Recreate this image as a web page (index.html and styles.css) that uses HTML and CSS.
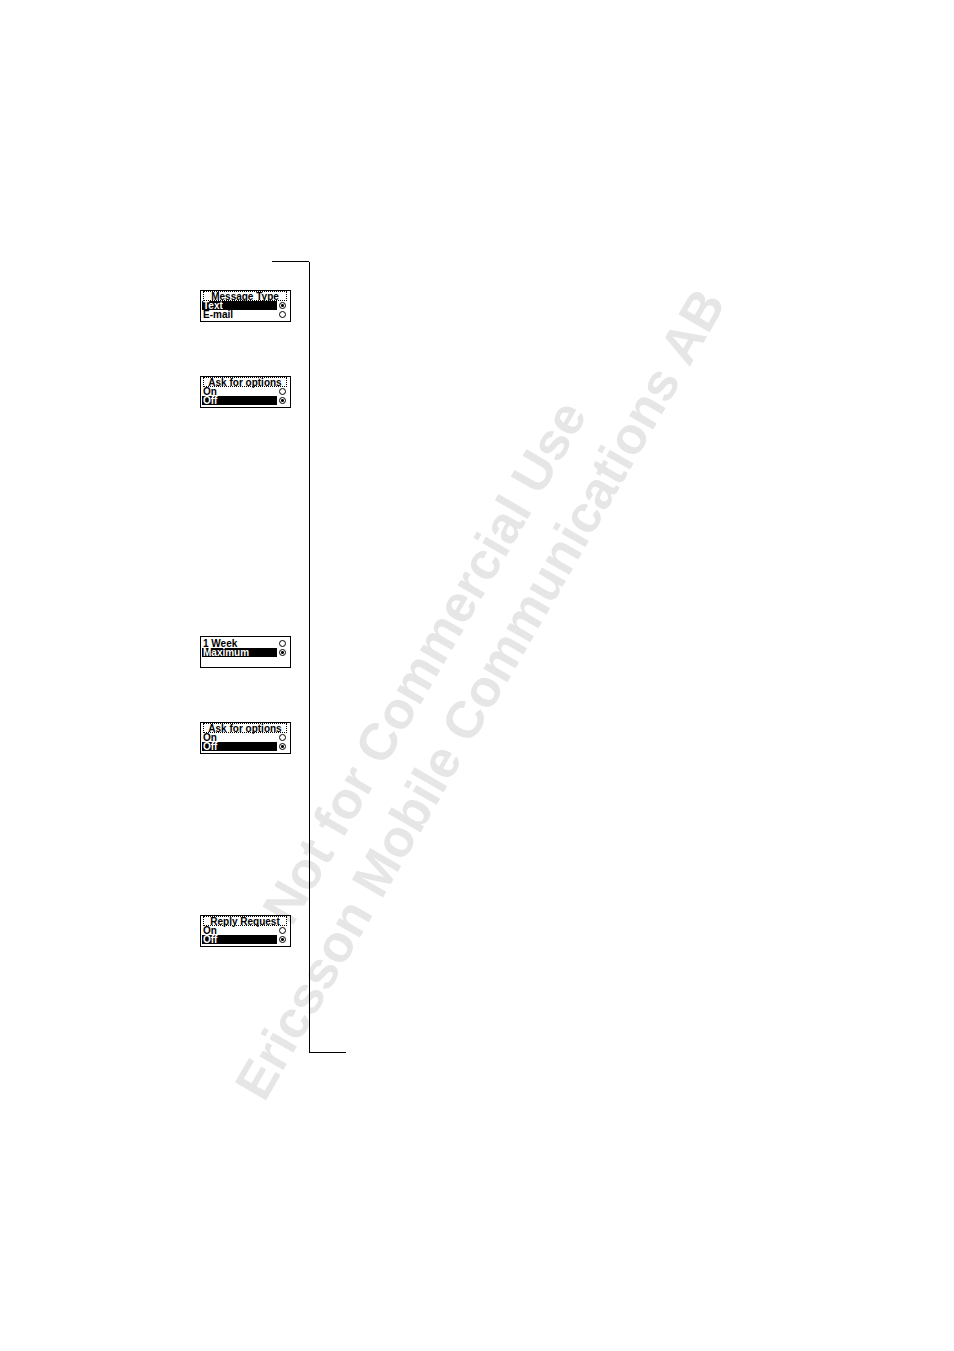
FILE: index.html
```html
<!DOCTYPE html>
<html lang="en">
<head>
    <meta charset="UTF-8">
    <meta name="viewport" content="width=device-width, initial-scale=1.0">
    <title>Message options</title>
    <link rel="stylesheet" href="styles.css">
</head>
<body>
    <div class="watermark">
        <p>Not for Commercial Use</p>
        <p>Ericsson Mobile Communications AB</p>
    </div>

    <main>
        <div class="rule rule-top"></div>
        <div class="column">
            <section class="screen" role="radiogroup" aria-labelledby="type-title">
                <h2 id="type-title">Message Type</h2>
                <label><span>Text</span><input type="radio" name="type" checked></label>
                <label><span>E-mail</span><input type="radio" name="type"></label>
            </section>

            <section class="screen" role="radiogroup" aria-labelledby="ask-type-title">
                <h2 id="ask-type-title">Ask for options</h2>
                <label><span>On</span><input type="radio" name="ask-type"></label>
                <label><span>Off</span><input type="radio" name="ask-type" checked></label>
            </section>

            <section class="screen untitled new-group" role="radiogroup" aria-label="Validity period">
                <label><span>1 Week</span><input type="radio" name="validity"></label>
                <label><span>Maximum</span><input type="radio" name="validity" checked></label>
            </section>

            <section class="screen" role="radiogroup" aria-labelledby="ask-validity-title">
                <h2 id="ask-validity-title">Ask for options</h2>
                <label><span>On</span><input type="radio" name="ask-validity"></label>
                <label><span>Off</span><input type="radio" name="ask-validity" checked></label>
            </section>

            <section class="screen reply" role="radiogroup" aria-labelledby="reply-title">
                <h2 id="reply-title">Reply Request</h2>
                <label><span>On</span><input type="radio" name="reply"></label>
                <label><span>Off</span><input type="radio" name="reply" checked></label>
            </section>
        </div>
        <div class="rule rule-bottom"></div>
    </main>
</body>
</html>
```

FILE: styles.css
```css
* {
    box-sizing: border-box;
}

body {
    font-family: "Liberation Sans", Arial, sans-serif;
    font-weight: bold;
    margin: 0;
    background-color: white;
    color: black;
}

main {
    position: relative;
    padding: 261px 0 298px 200px;
}

/* Page frame */
.rule {
    width: 37px;
    height: 1px;
    background-color: black;
}

.rule-top {
    margin-left: 72px;
}

.rule-bottom {
    margin-left: 109px;
}

.column {
    width: 110px;
    padding: 28px 0 105px;
    border-right: 1px solid black;
}

/* Phone displays */
.screen {
    width: 91px;
    height: 32px;
    padding: 0 3px 0 1px;
    border: 1px solid black;
    font-size: 10px;
    line-height: 9px;
}

.screen + .screen {
    margin-top: 54px;
}

.screen + .new-group {
    margin-top: 228px;
}

.screen + .reply {
    margin-top: 161px;
}

.untitled {
    padding-top: 2px;
}

.screen h2 {
    height: 10px;
    margin: 0 0 0 1px;
    border: 1px dotted black;
    background-color: white;
    font-size: 10px;
    line-height: 9px;
    text-align: center;
}

.screen label {
    display: flex;
    align-items: center;
    gap: 2px;
    height: 9px;
    background-color: white;
}

.screen span {
    width: 75px;
    height: 9px;
    padding-left: 1px;
}

.screen label:has(:checked) span {
    background-color: black;
    color: white;
}

input[type="radio"] {
    appearance: none;
    width: 7px;
    height: 7px;
    margin: 0;
    border: 1px solid black;
    border-radius: 50%;
    background-color: white;
}

input[type="radio"]:checked {
    background-image: radial-gradient(circle, black 1px, white 2px);
}

/* Diagonal notice behind the displays */
.watermark {
    position: absolute;
    top: 678px;
    left: 452px;
    width: 0;
    height: 128px;
    display: flex;
    flex-direction: column;
    align-items: center;
    transform: translateY(-50%) rotate(-60deg);
    color: #e6e6e6;
    font-size: 52px;
    font-kerning: none;
    line-height: 64px;
    white-space: nowrap;
}

.watermark p {
    margin: 0;
}
```
